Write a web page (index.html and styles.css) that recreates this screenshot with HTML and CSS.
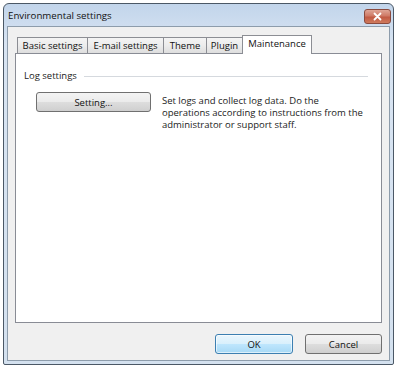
FILE: index.html
```html
<!DOCTYPE html>
<html lang="en">

<head>
    <title>Environmental settings</title>
    <link rel="stylesheet" href="styles.css">
</head>

<body>

    <div class="window">
        <!-- Title Bar -->
        <div class="titlebar">
            <span class="title">Environmental settings</span>
            <button class="close-btn" title="Close">
                <svg width="11" height="9" viewBox="0 0 11 9">
                    <path d="M2.5 1.5 L8.5 7.5 M8.5 1.5 L2.5 7.5" stroke="#fff" stroke-width="1.8" stroke-linecap="round" />
                </svg>
            </button>
        </div>

        <div class="client">
            <!-- Tabs -->
            <div class="tabs">
                <div class="tab tab-basic">Basic settings</div>
                <div class="tab tab-mail">E-mail settings</div>
                <div class="tab tab-theme">Theme</div>
                <div class="tab tab-plugin">Plugin</div>
                <div class="tab tab-maint active">Maintenance</div>
            </div>

            <!-- Maintenance Pane -->
            <div class="tab-pane">
                <div class="group-title">
                    <span>Log settings</span>
                    <div class="group-rule"></div>
                </div>
                <div class="log-row">
                    <button class="btn btn-setting">Setting...</button>
                    <p class="log-desc">Set logs and collect log data. Do the operations according to instructions from the administrator or support staff.</p>
                </div>
            </div>

            <!-- Footer -->
            <div class="dialog-footer">
                <button class="btn btn-default">OK</button>
                <button class="btn btn-cancel">Cancel</button>
            </div>
        </div>
    </div>

</body>

</html>
```

FILE: styles.css
```css
/* Base Reset */
* {
    box-sizing: border-box;
    margin: 0;
    padding: 0;
    font-family: 'Open Sans', 'Noto Sans', sans-serif;
}

body {
    background-color: #ffffff;
    color: #1b1b1b;
    font-size: 9.5px;
}

/* Window Frame */
.window {
    width: 391px;
    height: 362px;
    margin: 3px 0 0 3px;
    border: 1px solid #4b5866;
    border-radius: 6px 6px 2px 2px;
    background: linear-gradient(#c2d5eb, #d8e4f2 40px, #d4e1ef);
    display: flex;
    flex-direction: column;
    padding: 0 3px 3px 3px;
}

/* Title Bar */
.titlebar {
    height: 22px;
    display: flex;
    justify-content: space-between;
    align-items: flex-start;
    padding-left: 1px;
}

.title {
    font-size: 9.7px;
    line-height: 13px;
    margin-top: 5px;
    color: #111;
}

.close-btn {
    width: 27px;
    height: 15px;
    margin-top: 5px;
    margin-right: -1px;
    border: 1px solid #8a4a3e;
    border-radius: 3px;
    background: linear-gradient(#dfa596, #cf7a66 45%, #c15a44 55%, #cf7a5c);
    display: flex;
    align-items: center;
    justify-content: center;
}

/* Client Area */
.client {
    flex: 1;
    background-color: #f0f0f0;
    border: 1px solid #8d9cab;
    display: flex;
    flex-direction: column;
}

/* Tabs */
.tabs {
    display: flex;
    align-items: flex-end;
    height: 18px;
    margin-top: 8px;
    padding-left: 9px;
}

.tab {
    height: 16px;
    border: 1px solid #8c8e94;
    border-bottom: none;
    background: linear-gradient(#f4f4f4, #ececec 50%, #dedede);
    font-size: 9.5px;
    line-height: 15px;
    text-align: center;
    color: #111;
    margin-left: -1px;
}

.tab:first-child {
    margin-left: 0;
}

.tab-basic { width: 71px; }
.tab-mail { width: 77px; }
.tab-theme { width: 44px; }
.tab-plugin { width: 37px; }
.tab-maint { width: 70px; }

.tab.active {
    position: relative;
    height: 19px;
    margin-bottom: -1px;
    background: #ffffff;
    line-height: 16px;
}

/* Tab Pane */
.tab-pane {
    height: 270px;
    margin: 0 7px 0 7px;
    background-color: #ffffff;
    border: 1px solid #898c95;
    padding: 15px 13px 0 8px;
}

.group-title {
    display: flex;
    align-items: center;
    gap: 7px;
    line-height: 13px;
}

.group-rule {
    flex: 1;
    height: 1px;
    background-color: #d5d9de;
    margin-top: 1px;
}

.log-row {
    display: flex;
    align-items: flex-start;
    gap: 11px;
    margin-top: 10px;
    padding-left: 12px;
}

.log-desc {
    width: 208px;
    line-height: 11.8px;
    margin-top: 3px;
}

/* Buttons */
.btn {
    height: 20px;
    border: 1px solid #707070;
    border-radius: 3px;
    background: linear-gradient(#f3f3f3, #ebebeb 48%, #dddddd 52%, #cfcfcf);
    font-size: 9.5px;
    color: #111;
}

.btn-setting {
    width: 116px;
}

/* Footer */
.dialog-footer {
    display: flex;
    justify-content: flex-end;
    gap: 12px;
    margin-top: 11px;
    padding-right: 7px;
}

.btn-default {
    width: 78px;
    border-color: #3c7fb1;
    background: linear-gradient(#eaf6fd, #d9f0fc 48%, #bee6fd 52%, #a7d9f5);
    box-shadow: inset 0 0 0 1px rgba(255, 255, 255, 0.6);
}

.btn-cancel {
    width: 77px;
}
```
